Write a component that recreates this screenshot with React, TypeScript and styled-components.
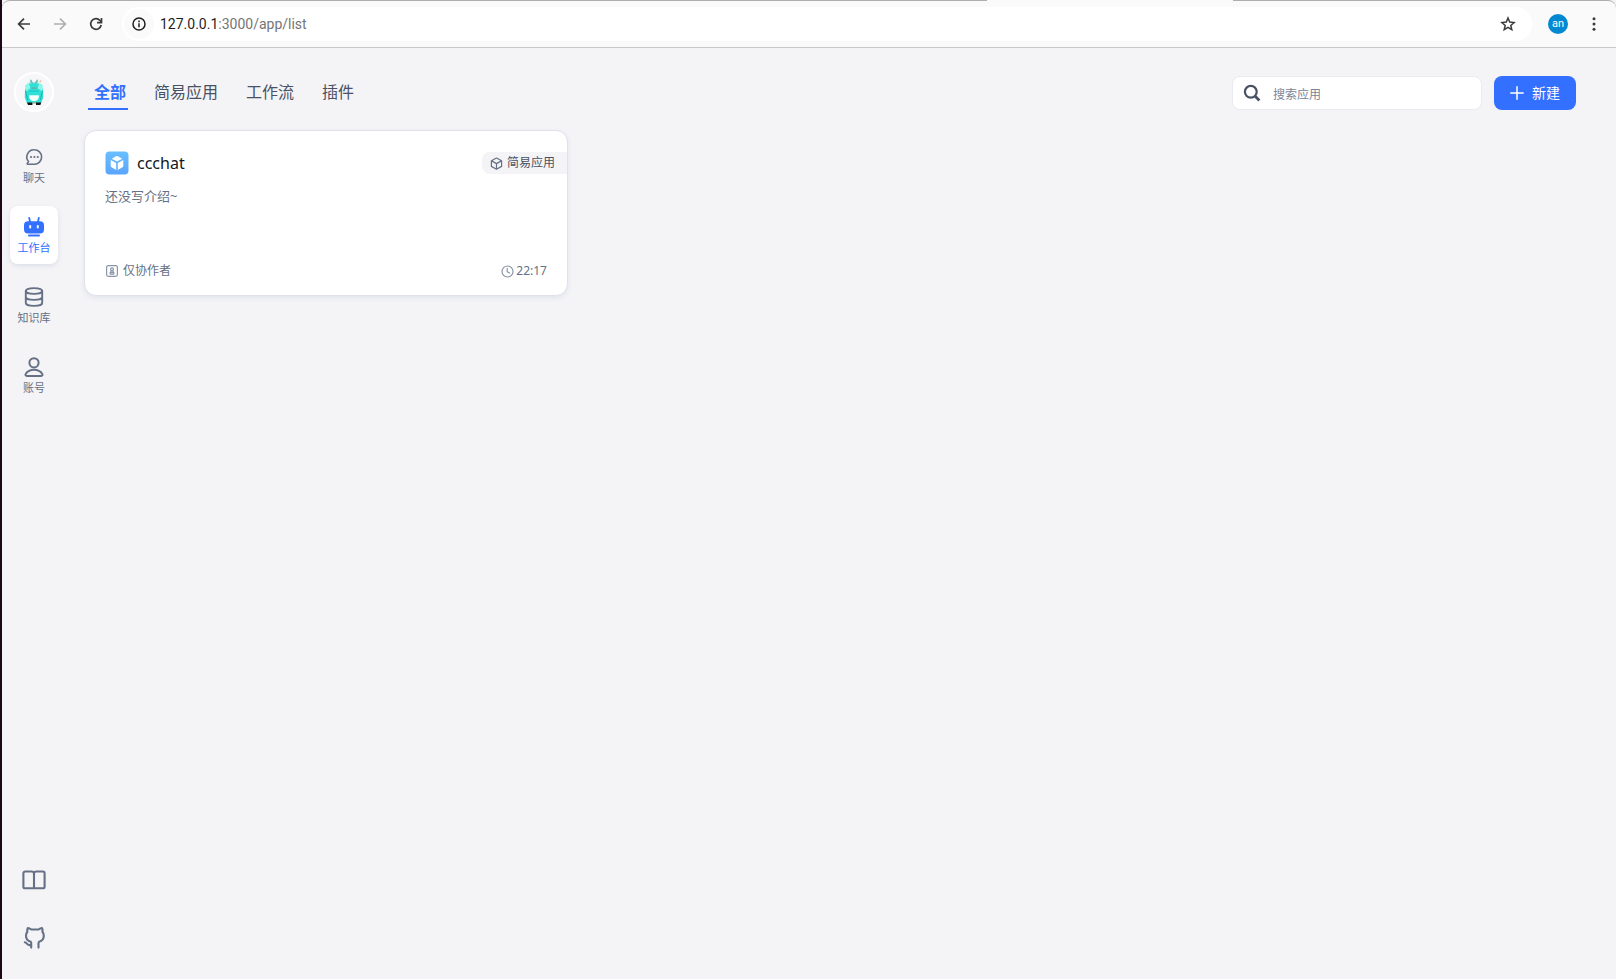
import React from "react";
import styled, { createGlobalStyle } from "styled-components";

const GlobalStyle = createGlobalStyle`
  *, *::before, *::after { box-sizing: border-box; }
  body {
    margin: 0;
    background: #f4f4f7;
    font-family: "Noto Sans", "Noto Sans CJK SC", sans-serif;
    color: #485264;
  }
  button, input { font: inherit; color: inherit; }
  button { border: 0; padding: 0; background: none; cursor: pointer; }
  a { color: inherit; text-decoration: none; }
  svg { display: block; flex: none; }
`;

const Frame = styled.div`
  min-height: 100vh;
  display: flex;
  flex-direction: column;
  border-left: 2px solid #1d0717;
  background: #f4f4f7;
`;

const Toolbar = styled.header`
  position: relative;
  height: 48px;
  display: flex;
  align-items: center;
  padding: 0 10px;
  background: #fafafa;
  border-top: 1px solid #aeaeae;
  border-bottom: 1px solid #c9c9cb;
  border-radius: 8px 8px 0 0;
`;

/* Opening in the top line where the selected browser tab joins the bar */
const TabJoin = styled.span`
  position: absolute;
  top: -1px;
  left: 61%;
  width: 246px;
  height: 1px;
  background: #fafafa;
`;

const NavButtons = styled.div`
  display: flex;
  gap: 12px;
  margin-right: 14px;
`;

const ToolButton = styled.button<{ $muted?: boolean }>`
  width: 24px;
  height: 24px;
  display: grid;
  place-items: center;
  color: ${(p) => (p.$muted ? "#b0b0b0" : "#3c3c3c")};
`;

const AddressBar = styled.div`
  flex: 1;
  height: 34px;
  display: flex;
  align-items: center;
  gap: 6px;
  padding: 0 12px 0 2px;
  border-radius: 17px;
  background: #fff;
`;

const SiteInfo = styled.button`
  width: 30px;
  height: 30px;
  display: grid;
  place-items: center;
  border-radius: 50%;
  background: #fafafa;
  color: #1f1f1f;
`;

const Url = styled.div`
  flex: 1;
  font-family: Roboto, "Noto Sans", sans-serif;
  font-size: 14px;
  line-height: 20px;
  color: #757575;
`;

const Host = styled.span`
  color: #1f1f1f;
`;

const Profile = styled.button`
  width: 20px;
  height: 20px;
  margin: 0 14px 0 16px;
  border-radius: 50%;
  background: #0288d1;
  color: #fff;
  font-family: Roboto, sans-serif;
  font-size: 11px;
  line-height: 18px;
`;

const Body = styled.div`
  flex: 1;
  display: flex;
`;

const Sidebar = styled.nav`
  width: 64px;
  display: flex;
  flex-direction: column;
  align-items: center;
  padding: 24px 0 19px;
`;

const Avatar = styled.a`
  width: 40px;
  height: 40px;
  display: grid;
  place-items: center;
  margin-bottom: 24px;
  border: 2px solid #fff;
  border-radius: 50%;
  background: #f7f7f9;
`;

const SideList = styled.div`
  flex: 1;
  display: flex;
  flex-direction: column;
  gap: 12px;
`;

const SideItem = styled.a<{ $active?: boolean }>`
  width: 48px;
  height: 58px;
  display: flex;
  flex-direction: column;
  align-items: center;
  gap: 3px;
  padding-top: 11px;
  border-radius: 8px;
  font-size: 11px;
  line-height: 16px;
  color: ${(p) => (p.$active ? "#3370ff" : "#667085")};
  background: ${(p) => (p.$active ? "#fff" : "transparent")};
  box-shadow: ${(p) => (p.$active ? "0 2px 5px rgba(19, 51, 107, 0.1)" : "none")};
`;

const FooterLinks = styled.div`
  display: flex;
  flex-direction: column;
  gap: 14px;
`;

const FooterLink = styled.a`
  width: 44px;
  height: 44px;
  display: grid;
  place-items: center;
  color: #667085;
`;

const Main = styled.main`
  flex: 1;
  min-width: 0;
  padding: 28px 40px 28px 18px;
`;

const Header = styled.div`
  display: flex;
  gap: 12px;
  height: 34px;
  margin-bottom: 20px;
`;

const Tabs = styled.div`
  flex: 1;
  display: flex;
  gap: 20px;
  padding-left: 4px;
`;

const Tab = styled.button<{ $active?: boolean }>`
  padding: 0 2px 0 6px;
  border-bottom: 2px solid ${(p) => (p.$active ? "#3370ff" : "transparent")};
  font-size: 16px;
  line-height: 24px;
  white-space: nowrap;
  font-weight: ${(p) => (p.$active ? 700 : 400)};
  color: ${(p) => (p.$active ? "#3370ff" : "#485264")};
`;

const Search = styled.label`
  width: 250px;
  display: flex;
  align-items: center;
  gap: 12px;
  padding: 0 11px 0 10px;
  border: 1px solid #e8ebf0;
  border-radius: 8px;
  background: #fff;
`;

const SearchInput = styled.input`
  flex: 1;
  min-width: 0;
  height: 22px;
  padding: 2px 0 0;
  border: 0;
  outline: 0;
  background: none;
  font-size: 12px;
  &::placeholder { color: #7b8698; opacity: 1; }
`;

const CreateButton = styled.button`
  width: 82px;
  display: flex;
  align-items: center;
  justify-content: center;
  gap: 8px;
  border-radius: 8px;
  background: #3370ff;
  color: #fff;
  font-size: 14px;
  line-height: 20px;
`;

const Grid = styled.div`
  display: grid;
  grid-template-columns: repeat(3, minmax(0, 1fr));
  gap: 20px;
`;

const Card = styled.article`
  display: flex;
  flex-direction: column;
  min-height: 166px;
  padding: 20px 0 14px 20px;
  border: 1px solid #dfe1ed;
  border-radius: 12px;
  background: #fff;
  box-shadow: 0 2px 5px rgba(19, 51, 107, 0.08);
`;

const CardTop = styled.div`
  display: flex;
  align-items: center;
  gap: 8px;
`;

const CardTitle = styled.h2`
  flex: 1;
  margin: 0;
  font-size: 16px;
  font-weight: 400;
  line-height: 24px;
  color: #111824;
`;

const TypeTag = styled.span`
  height: 22px;
  display: flex;
  align-items: center;
  gap: 4px;
  padding: 0 12px 0 8px;
  border-radius: 8px 0 0 8px;
  background: #f4f4f7;
  color: #485264;
  font-size: 12px;
  line-height: 20px;
`;

const Description = styled.p`
  flex: 1;
  margin: 11px 20px 0 0;
  font-size: 13px;
  line-height: 20px;
  color: #667085;
`;

const CardFooter = styled.div`
  display: flex;
  justify-content: space-between;
  padding-right: 20px;
  font-size: 12px;
  line-height: 20px;
  color: #667085;
`;

const Meta = styled.span<{ $gap: number }>`
  display: flex;
  align-items: center;
  gap: ${(p) => p.$gap}px;
`;

const line = {
  fill: "none",
  stroke: "currentColor",
  strokeLinecap: "round" as const,
  strokeLinejoin: "round" as const,
};

const BackIcon = () => (
  <svg width="16" height="16" viewBox="0 0 16 16" fill="none" stroke="currentColor" strokeWidth="1.7">
    <path d="M14 8H3M8 2.6 2.6 8 8 13.4" />
  </svg>
);

const ForwardIcon = () => (
  <svg width="16" height="16" viewBox="0 0 16 16" fill="none" stroke="currentColor" strokeWidth="1.7">
    <path d="M2 8h11M8 2.6 13.4 8 8 13.4" />
  </svg>
);

const ReloadIcon = () => (
  <svg width="16" height="16" viewBox="0 0 16 16" fill="none" stroke="currentColor" strokeWidth="1.7">
    <path d="M13.2 9A5.3 5.3 0 1 1 12 4.5l1.2 1.4" />
    <path d="M13.5 2v4.6H9" />
  </svg>
);

const InfoIcon = () => (
  <svg width="16" height="16" viewBox="0 0 16 16" fill="none" stroke="currentColor" strokeWidth="1.5">
    <circle cx="8" cy="8" r="6" />
    <path d="M8 7.2v4M8 4.6v1.6" />
  </svg>
);

const StarIcon = () => (
  <svg width="18" height="18" viewBox="0 0 18 18" fill="none" stroke="currentColor" strokeWidth="1.5">
    <path d="m9 3 1.7 4.1 4.4.4-3.3 2.9 1 4.3L9 12.4l-3.8 2.3 1-4.3-3.3-2.9 4.4-.4z" />
  </svg>
);

const MenuIcon = () => (
  <svg width="16" height="16" viewBox="0 0 16 16" fill="currentColor">
    <circle cx="8" cy="2.7" r="1.5" />
    <circle cx="8" cy="8" r="1.5" />
    <circle cx="8" cy="13.3" r="1.5" />
  </svg>
);

const CreatureIcon = () => (
  <svg width="20" height="28" viewBox="0 0 20 28">
    <path d="M4.600 8 6.300.8l2.900 3.400h1.600L13.400.6l1.900 7z" fill="#a4ddd5" />
    <path d="M6.800 2.200 8.600 6M13.300 2.200 11.400 6" stroke="#4f9995" strokeWidth=".8" />
    <circle cx="16.400" cy="3.200" r=".9" fill="#e7bd8b" />
    <path d="M3 7.200C5 4.600 15 4.600 17 7.200l2 4.800.2 7.400-2 5.800H3l-2.200-5.800.2-7.400z" fill="#2ee0d6" />
    <path d="M1 7.400 4.600 4.400l1.800 5.800-4.200 3zM19 7.400l-3.600-3-1.800 5.800 4.200 3z" fill="#8df5ea" />
    <path d="m1.600 13 2 9M18.400 13l-2 9" stroke="#17b3ae" strokeWidth="1" />
    <path d="M7.400 9.400h5.200v1.400H7.400z" fill="#6fa8a4" />
    <path d="M5.400 12.400h9.200v1.400H5.400z" fill="#1ccfc6" />
    <path d="M5.200 17.200h9.600c.6 3-1.800 6-4.800 6s-5.400-3-4.800-6z" fill="#f2fffb" />
    <path d="M3 24.600h5.400V27H4zM12 24.600h5.200L16.400 27H12z" fill="#121616" />
    <path d="M8.600 25h3.200" stroke="#d69662" />
  </svg>
);

const ChatIcon = () => (
  <svg width="20" height="20" viewBox="0 0 20 20" {...line} strokeWidth="1.600">
    <path d="M10.400 2.800a7.200 7.200 0 1 1 0 14.400H3.800c-.6 0-.8-.5-.5-.9l1.200-1.700A7.200 7.200 0 0 1 10.400 2.800z" />
    <g fill="currentColor" stroke="none">
      <circle cx="7" cy="10" r="1.100" />
      <circle cx="10.400" cy="10" r="1.100" />
      <circle cx="13.800" cy="10" r="1.100" />
    </g>
  </svg>
);

const RobotIcon = () => (
  <svg width="20" height="20" viewBox="0 0 20 20" fill="currentColor">
    <path d="m5.200 1 .9 4M14.800 1l-.9 4" stroke="currentColor" strokeWidth="1.800" strokeLinecap="round" />
    <path
      fillRule="evenodd"
      d="M4 4.200h12a4 4 0 0 1 4 4v4.200a4 4 0 0 1-4 4H4a4 4 0 0 1-4-4V8.200a4 4 0 0 1 4-4zM6.200 8a1 1 0 0 0-1 1v1.400a1 1 0 0 0 2 0V9a1 1 0 0 0-1-1zm7.600 0a1 1 0 0 0-1 1v1.400a1 1 0 0 0 2 0V9a1 1 0 0 0-1-1z"
    />
    <rect x="4" y="17.600" width="12" height="2" rx="1" />
  </svg>
);

const DatabaseIcon = () => (
  <svg width="20" height="20" viewBox="0 0 20 20" {...line} strokeWidth="1.900">
    <ellipse cx="10" cy="4" rx="8.200" ry="2.900" />
    <path d="M1.800 4v12c0 1.600 3.600 2.900 8.200 2.900s8.200-1.300 8.200-2.900V4M1.800 10c0 1.600 3.600 2.900 8.200 2.900s8.200-1.300 8.200-2.900" />
  </svg>
);

const UserIcon = () => (
  <svg width="20" height="20" viewBox="0 0 20 20" {...line} strokeWidth="2">
    <circle cx="10" cy="5.800" r="4.600" />
    <path d="M10 12.800c-3.700 0-6.700 1.700-8.300 4.200-.6 1 0 2 1.100 2h14.400c1.100 0 1.700-1 1.100-2-1.600-2.500-4.600-4.200-8.300-4.200z" />
  </svg>
);

const BookIcon = () => (
  <svg width="24" height="24" viewBox="0 0 24 24" {...line} strokeWidth="2.100">
    <path d="M12 5.800c0-1.400-1-2.300-2.400-2.300H3.200A1.800 1.800 0 0 0 1.400 5.300v13.400a1.600 1.600 0 0 0 1.600 1.600h18a1.600 1.600 0 0 0 1.600-1.600V5.300a1.800 1.800 0 0 0-1.800-1.800h-6.400C13 3.500 12 4.400 12 5.800zV20" />
  </svg>
);

const GithubIcon = () => (
  <svg width="24" height="24" viewBox="0 0 24 24" {...line} strokeWidth="2.100">
    <path d="M9.200 21.600v-3.900c.1-.9-.1-1.600-.5-2-3.200-.6-4.700-2.700-4.700-5.900 0-1.700.5-3 1.400-4-.3-1.300-.2-2.700.3-3.700 1.400.1 2.500.6 3.600 1.400h7.200c1.100-.8 2.200-1.300 3.600-1.400.5 1 .6 2.400.3 3.700.9 1 1.400 2.300 1.400 4 0 3.200-1.500 5.300-4.700 5.900-.4.500-.6 1.100-.6 2v3.900M9.200 18.800c-1.900.6-3.500.1-4.500-1.300-.5-.7-1-1.100-1.900-1.200" />
  </svg>
);

const SearchIcon = () => (
  <svg width="18" height="18" viewBox="0 0 18 18" fill="none" stroke="#485264">
    <circle cx="7.800" cy="7.800" r="5.900" strokeWidth="2.200" />
    <path d="m12.200 12.200 4.200 4.200" strokeWidth="2.800" />
  </svg>
);

const PlusIcon = () => (
  <svg width="14" height="14" viewBox="0 0 14 14" {...line} strokeWidth="1.500">
    <path d="M7 .8v12.400M.8 7h12.400" />
  </svg>
);

const AppLogo = () => (
  <svg width="24" height="24" viewBox="0 0 24 24">
    <defs>
      <linearGradient id="logo" x1="0" y1="0" x2="0" y2="1">
        <stop offset="0" stopColor="#67bfff" />
        <stop offset="1" stopColor="#5ba4ff" />
      </linearGradient>
    </defs>
    <rect x=".5" y=".5" width="23" height="23" rx="4" fill="url(#logo)" />
    <path d="M11.300 5.200a1.600 1.600 0 0 1 1.400 0l4.600 2.500L12 10.600 6.700 7.700z" fill="#fff" />
    <path d="M5.700 8.900l5.500 3.100v6.900l-4.700-2.600a1.600 1.600 0 0 1-.8-1.400zM18.300 8.900l-5.500 3.100v6.900l4.700-2.600a1.600 1.600 0 0 0 .8-1.400z" fill="#fff" />
  </svg>
);

const CubeIcon = () => (
  <svg width="13" height="13" viewBox="0 0 13 13" {...line} stroke="#667085" strokeWidth="1.200">
    <path d="M6.500 1 11.600 3.700v5.700L6.500 12.200 1.400 9.400V3.700zM1.600 3.900l4.900 2.700 4.900-2.700M6.500 6.600V12" />
  </svg>
);

const PermissionIcon = () => (
  <svg width="14" height="14" viewBox="0 0 14 14" {...line} stroke="#8a95a7" strokeWidth="1.200">
    <rect x="1.600" y="1.600" width="10.800" height="10.800" rx="1.800" />
    <circle cx="7" cy="5.200" r="1.400" />
    <path d="M6.200 6.700 5.600 8.400h2.800l-.6-1.700M5.200 8.400v1.700h3.600V8.400" />
  </svg>
);

const ClockIcon = () => (
  <svg width="13" height="13" viewBox="0 0 13 13" {...line} stroke="#8a95a7" strokeWidth="1.200">
    <circle cx="6.500" cy="6.500" r="5.500" />
    <path d="M6.200 3.300v3.500l2.300 1.200" />
  </svg>
);

const sideItems = [
  { label: "聊天", Icon: ChatIcon },
  { label: "工作台", Icon: RobotIcon, active: true },
  { label: "知识库", Icon: DatabaseIcon },
  { label: "账号", Icon: UserIcon },
];

const tabs = ["全部", "简易应用", "工作流", "插件"];

const apps = [
  { name: "ccchat", type: "简易应用", intro: "还没写介绍~", access: "仅协作者", time: "22:17" },
];

export default function App() {
  return (
    <Frame lang="zh-CN">
      <GlobalStyle />
      <Toolbar>
        <TabJoin />
        <NavButtons>
          <ToolButton aria-label="后退"><BackIcon /></ToolButton>
          <ToolButton aria-label="前进" $muted><ForwardIcon /></ToolButton>
          <ToolButton aria-label="刷新"><ReloadIcon /></ToolButton>
        </NavButtons>
        <AddressBar>
          <SiteInfo aria-label="网站信息"><InfoIcon /></SiteInfo>
          <Url><Host>127.0.0.1</Host>:3000/app/list</Url>
          <ToolButton aria-label="收藏"><StarIcon /></ToolButton>
        </AddressBar>
        <Profile>an</Profile>
        <ToolButton aria-label="菜单"><MenuIcon /></ToolButton>
      </Toolbar>
      <Body>
        <Sidebar>
          <Avatar href="#account" aria-label="头像"><CreatureIcon /></Avatar>
          <SideList>
            {sideItems.map(({ label, Icon, active }) => (
              <SideItem key={label} href="#" $active={active}>
                <Icon />
                {label}
              </SideItem>
            ))}
          </SideList>
          <FooterLinks>
            <FooterLink href="#docs" aria-label="文档"><BookIcon /></FooterLink>
            <FooterLink href="#github" aria-label="GitHub"><GithubIcon /></FooterLink>
          </FooterLinks>
        </Sidebar>
        <Main>
          <Header>
            <Tabs>
              {tabs.map((tab, i) => (
                <Tab key={tab} $active={i === 0}>{tab}</Tab>
              ))}
            </Tabs>
            <Search>
              <SearchIcon />
              <SearchInput type="text" placeholder="搜索应用" aria-label="搜索应用" />
            </Search>
            <CreateButton>
              <PlusIcon />
              新建
            </CreateButton>
          </Header>
          <Grid>
            {apps.map((app) => (
              <Card key={app.name}>
                <CardTop>
                  <AppLogo />
                  <CardTitle>{app.name}</CardTitle>
                  <TypeTag><CubeIcon />{app.type}</TypeTag>
                </CardTop>
                <Description>{app.intro}</Description>
                <CardFooter>
                  <Meta $gap={4}><PermissionIcon />{app.access}</Meta>
                  <Meta $gap={2}><ClockIcon />{app.time}</Meta>
                </CardFooter>
              </Card>
            ))}
          </Grid>
        </Main>
      </Body>
    </Frame>
  );
}
